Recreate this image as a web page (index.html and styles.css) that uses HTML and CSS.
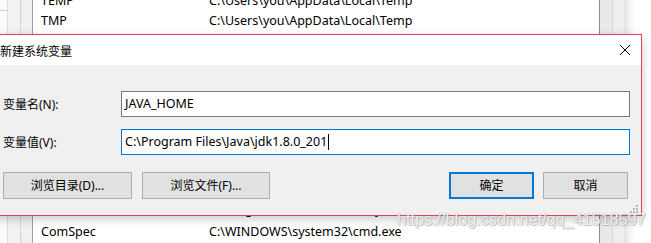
FILE: index.html
```html
<!DOCTYPE html>
<html>
<head>
<meta charset="utf-8">
<link rel="stylesheet" href="styles.css">
</head>
<body>
<div class="desk">
  <div class="strip">
    <div class="s-a"><div class="s-a-line"></div></div>
    <div class="s-b"></div>
    <div class="s-c"></div>
  </div>
  <div class="list">
    <div class="rows rows-top">
      <div class="row"><span class="k">TEMP</span><span class="v">C:\Users\you\AppData\Local\Temp</span></div>
      <div class="row"><span class="k">TMP</span><span class="v">C:\Users\you\AppData\Local\Temp</span></div>
    </div>
    <div class="rows rows-bottom">
      <div class="row row-hidden"><span class="k">DriverData</span><span class="v">C:\Program Files\Windows\System32\Drivers\DriverData</span></div>
      <div class="row"><span class="k">ComSpec</span><span class="v">C:\WINDOWS\system32\cmd.exe</span></div>
    </div>
  </div>
  <div class="scroll"><div class="sc-a"></div><div class="sc-b"></div></div>
  <div class="shade"></div>
</div>

<div class="dialog">
  <div class="titlebar">
    <span class="title">新建系统变量</span>
    <svg class="close" width="12" height="12" viewBox="0 0 12 12"><path d="M1 1 L11 11 M11 1 L1 11" stroke="#000" stroke-width="1" fill="none"/></svg>
  </div>
  <div class="body">
    <div class="field">
      <label class="lbl">变量名(N):</label>
      <div class="input">JAVA_HOME</div>
    </div>
    <div class="field field-2">
      <label class="lbl">变量值(V):</label>
      <div class="input focus">C:\Program Files\Java\jdk1.8.0_201<span class="caret"></span></div>
    </div>
    <div class="buttons">
      <div class="btn b-dir">浏览目录(D)...</div>
      <div class="btn b-file">浏览文件(F)...</div>
      <div class="grow"></div>
      <div class="btn b-ok">确定</div>
      <div class="btn b-cancel">取消</div>
    </div>
  </div>
  <svg class="grip" width="8" height="8" viewBox="0 0 8 8">
    <rect x="6" y="0" width="2" height="2" fill="#b8b8b8"/>
    <rect x="3" y="3" width="2" height="2" fill="#b8b8b8"/>
    <rect x="6" y="3" width="2" height="2" fill="#b8b8b8"/>
    <rect x="0" y="6" width="2" height="2" fill="#b8b8b8"/>
    <rect x="3" y="6" width="2" height="2" fill="#b8b8b8"/>
    <rect x="6" y="6" width="2" height="2" fill="#b8b8b8"/>
  </svg>
</div>

<div class="watermark">https://blog.csdn.net/qq_41518597</div>
</body>
</html>
```

FILE: styles.css
```css
html, body {
  margin: 0;
  padding: 0;
}
body {
  width: 651px;
  height: 243px;
  overflow: hidden;
  position: relative;
  background: #ffffff;
  font-family: "Noto Sans", "Noto Sans CJK SC", sans-serif;
  font-size: 12.5px;
  color: #000;
}

/* background window */
.desk {
  display: flex;
  height: 243px;
}
.strip {
  display: flex;
  width: 34px;
  flex: none;
}
.s-a {
  width: 7px;
  background: #fafafa;
  border-right: 1px solid #dcdcdc;
}
.s-a-line {
  height: 10px;
  border-bottom: 1px solid #d0d0d0;
}
.s-b {
  width: 12px;
  background: #f2f2f2;
  border-right: 1px solid #d4d4d4;
}
.s-c {
  width: 11px;
  background: #f0f0f0;
  border-right: 1px solid #a0a0a0;
}
.list {
  width: 565px;
  flex: none;
  background: #fff;
  border-right: 1px solid #8c8c8c;
  display: flex;
  flex-direction: column;
  justify-content: space-between;
}
.rows-top {
  margin-top: -9px;
}
.rows-bottom {
  margin-bottom: 1px;
}
.row {
  display: flex;
  height: 20px;
  line-height: 20px;
  padding-left: 7px;
  white-space: nowrap;
  color: #000;
}
.row-hidden {
  line-height: 15px;
}
.k {
  width: 168px;
  flex: none;
}
.scroll {
  display: flex;
  flex: none;
}
.sc-a {
  width: 12px;
  background: #e9e9e9;
  border-right: 1px solid #d8d8d8;
}
.sc-b {
  width: 11px;
  background: #eeeeee;
}
.shade {
  width: 10px;
  flex: none;
  background: linear-gradient(to right, #e2e2e2, #ffffff);
}

/* dialog */
.dialog {
  position: absolute;
  left: -9px;
  top: 34px;
  width: 649px;
  height: 180px;
  border: 1px solid #e3405a;
  background: #f0f0f0;
  box-shadow: 0 3px 9px rgba(0, 0, 0, 0.22);
  display: flex;
  flex-direction: column;
}
.titlebar {
  height: 30px;
  background: #ffffff;
  display: flex;
  align-items: center;
  padding-left: 8px;
  padding-right: 10px;
  flex: none;
}
.title {
  flex: 1;
  font-size: 12px;
  padding-top: 1px;
}
.close {
  display: block;
}
.body {
  padding: 26px 11px 0 11px;
  display: flex;
  flex-direction: column;
}
.field {
  display: flex;
  align-items: center;
}
.field-2 {
  margin-top: 12px;
}
.lbl {
  width: 118px;
  flex: none;
  font-size: 12px;
}
.input {
  flex: 1;
  height: 24px;
  line-height: 24px;
  border: 1px solid #7a7a7a;
  background: #fff;
  padding-left: 3px;
  white-space: nowrap;
  display: flex;
  align-items: center;
}
.input.focus {
  border-color: #0078d7;
}
.caret {
  display: inline-block;
  width: 1px;
  height: 16px;
  background: #000;
  margin-left: 1px;
}
.buttons {
  display: flex;
  margin-top: 17px;
  padding-right: 2px;
}
.btn {
  height: 25px;
  line-height: 25px;
  border: 1px solid #adadad;
  background: #e1e1e1;
  text-align: center;
  font-size: 12px;
  flex: none;
}
.b-dir {
  width: 127px;
}
.b-file {
  width: 126px;
  margin-left: 10px;
}
.grow {
  flex: 1;
}
.b-ok {
  width: 81px;
  height: 23px;
  line-height: 23px;
  border: 2px solid #0078d7;
}
.b-cancel {
  width: 83px;
  margin-left: 9px;
}
.grip {
  position: absolute;
  right: 3px;
  bottom: 2px;
}

.watermark {
  position: absolute;
  left: 397px;
  top: 210px;
  font-family: "Liberation Sans", sans-serif;
  font-size: 16.2px;
  color: rgba(255, 255, 255, 0.9);
  text-shadow: 0 0 1px rgba(110, 110, 110, 0.7), 1px 1px 1px rgba(150, 150, 150, 0.5);
  white-space: nowrap;
}
```
